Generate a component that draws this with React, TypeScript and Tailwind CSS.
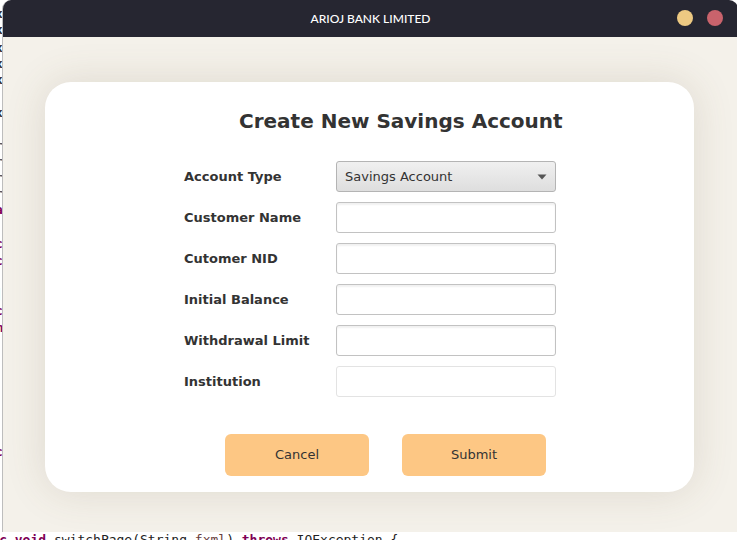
import React from "react";

const codeLines: { top: number; text: string; color: string }[] = [
  { top: 6, text: "xxxxxxx", color: "#333" },
  { top: 22, text: "xxxxxxx", color: "#333" },
  { top: 40, text: "xxxxxxx", color: "#333" },
  { top: 56, text: "xxxxxxx", color: "#333" },
  { top: 72, text: "xxxxxxx", color: "#333" },
  { top: 105, text: "xxxxxxx", color: "#333" },
  { top: 138, text: "xxxxxxr", color: "#555" },
  { top: 154, text: "xxxxxxr", color: "#555" },
  { top: 170, text: "xxxxxxr", color: "#555" },
  { top: 186, text: "xxxxxxr", color: "#555" },
  { top: 202, text: "xxxxxxa", color: "#7f0055" },
  { top: 236, text: "xxxxxxc", color: "#7f0055" },
  { top: 253, text: "xxxxxxc", color: "#7f0055" },
  { top: 286, text: "xxxxxx|", color: "#888" },
  { top: 303, text: "xxxxxxc", color: "#7f0055" },
  { top: 320, text: "xxxxxxm", color: "#7f0055" },
  { top: 444, text: "xxxxxxc", color: "#7f0055" },
];

function Field({ disabled }: { disabled?: boolean }) {
  return (
    <div
      className={
        disabled
          ? "h-[31px] w-[220px] rounded-[3px] border border-[#e3e3e3] bg-white"
          : "h-[31px] w-[220px] rounded-[3px] border border-[#c2c2c2] bg-white shadow-[inset_0_2px_2px_rgba(0,0,0,0.06)]"
      }
    />
  );
}

function Row({ label, children }: { label: string; children: React.ReactNode }) {
  return (
    <div className="flex h-[31px] items-center">
      <div className="w-[152px] text-[13px] font-bold text-[#333]">{label}</div>
      {children}
    </div>
  );
}

export default function App() {
  return (
    <div
      className="relative h-[540px] w-[737px] overflow-hidden bg-white"
      style={{ fontFamily: '"DejaVu Sans", sans-serif' }}
    >
      {/* IDE behind */}
      {codeLines.map((l, i) => (
        <div
          key={i}
          className="absolute left-[-52px] whitespace-pre text-[13px] font-bold leading-[16px]"
          style={{ top: l.top, color: l.color, fontFamily: '"DejaVu Sans Mono", monospace' }}
        >
          {l.text}
        </div>
      ))}
      <div
        className="absolute left-[-40px] top-[532px] whitespace-pre text-[13px] leading-[16px]"
        style={{ fontFamily: '"DejaVu Sans Mono", monospace' }}
      >
        <span className="font-bold text-[#7f0055]">public void </span>
        <span className="text-[#222]">switchPage(String </span>
        <span className="text-[#6a3e3e]">fxml</span>
        <span className="text-[#222]">) </span>
        <span className="font-bold text-[#7f0055]">throws </span>
        <span className="text-[#222]">IOException {"{"}</span>
      </div>

      {/* Window */}
      <div className="absolute left-[2px] top-0 flex h-[532px] w-[736px] flex-col overflow-hidden rounded-t-[9px] border-l border-[#bdbdbd]">
        <div className="relative flex h-[37px] shrink-0 items-center justify-center bg-[#262631]">
          <span
            className="text-[12px] font-medium text-white"
            style={{ fontFamily: "Lato, sans-serif" }}
          >
            ARIOJ BANK LIMITED
          </span>
          <div className="absolute right-[15px] top-[10px] flex gap-[14px]">
            <div className="h-[16px] w-[16px] rounded-full bg-[#edc982]" />
            <div className="h-[16px] w-[16px] rounded-full bg-[#c9636c]" />
          </div>
        </div>
        <div className="flex-1 bg-[#f4f1ea] pl-[42px] pt-[45px]">
          <div className="flex h-[410px] w-[649px] flex-col rounded-[26px] bg-white shadow-[0_0_40px_rgba(110,95,60,0.16)]">
            <div className="pl-[194px] pt-[27px] text-[20px] font-bold leading-[24px] text-[#333]">
              Create New Savings Account
            </div>
            <div className="flex flex-col gap-[10px] pl-[139px] pt-[28px]">
              <Row label="Account Type">
                <div className="flex h-[31px] w-[220px] items-center justify-between rounded-[3px] border border-[#b4b4b4] bg-gradient-to-b from-[#f0f0f0] to-[#dedede] pl-[8px] pr-[8px]">
                  <span className="text-[13px] text-[#333]">Savings Account</span>
                  <svg width="10" height="6" viewBox="0 0 10 6">
                    <polygon points="0.5,0.5 9.5,0.5 5,5.5" fill="#555" />
                  </svg>
                </div>
              </Row>
              <Row label="Customer Name">
                <Field />
              </Row>
              <Row label="Cutomer NID">
                <Field />
              </Row>
              <Row label="Initial Balance">
                <Field />
              </Row>
              <Row label="Withdrawal Limit">
                <Field />
              </Row>
              <Row label="Institution">
                <Field disabled />
              </Row>
            </div>
            <div className="flex gap-[33px] pl-[180px] pt-[37px]">
              <button className="h-[42px] w-[144px] rounded-[6px] bg-[#fdc784] text-[13px] text-[#333]">
                Cancel
              </button>
              <button className="h-[42px] w-[144px] rounded-[6px] bg-[#fdc784] text-[13px] text-[#333]">
                Submit
              </button>
            </div>
          </div>
        </div>
      </div>
    </div>
  );
}
